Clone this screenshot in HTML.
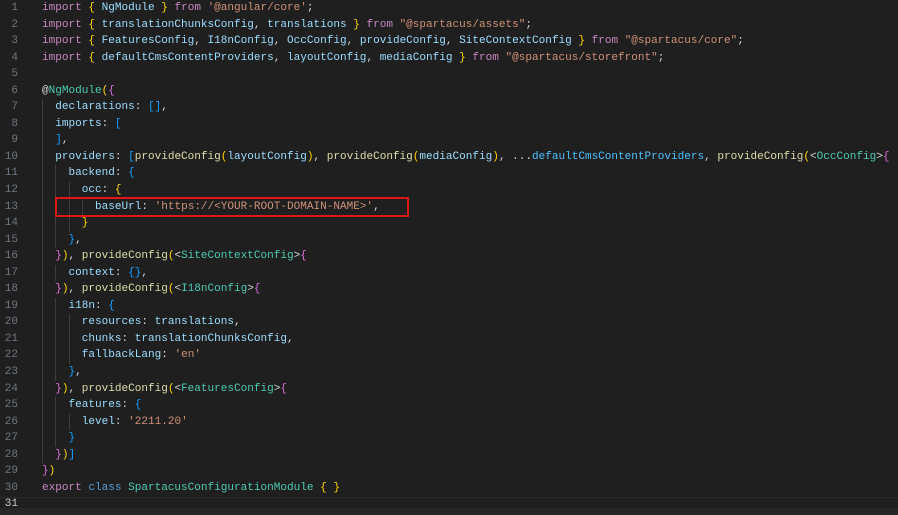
<!DOCTYPE html>
<html><head><meta charset="utf-8"><style>
html,body{margin:0;padding:0;background:#1f1f1f;width:898px;height:515px;overflow:hidden}
#ed{position:absolute;left:0;top:0;width:898px;font-family:"Liberation Mono",monospace;font-size:11.04px;line-height:16.55px;color:#d4d4d4}
.l{position:relative;height:16.55px;white-space:pre}
.n{position:absolute;left:0;width:18px;text-align:right;color:#6e7681}
.c{position:absolute;left:42px;white-space:pre}
.g{display:inline-block;font-style:normal;box-shadow:inset 1px 0 0 #3d3d3d}
.k{color:#c586c0}.y{color:#ffd700}.p{color:#da70d6}.b{color:#179fff}
.v{color:#9cdcfe}.s{color:#ce9178}.t{color:#4ec9b0}.f{color:#dcdcaa}.kw{color:#569cd6}.cn{color:#4fc1ff}
#cur{position:absolute;left:0;top:497px;width:898px;height:11px;border-top:1px solid #2a2a2a}
#bot{position:absolute;left:0;top:508px;width:898px;height:7px;background:#262626}
#box{position:absolute;left:55px;top:197px;width:350px;height:16px;border:2px solid #e0141b}
</style></head><body>
<div id="cur"></div><div id="bot"></div>
<div id="ed"><div class="l"><span class="n">1</span><span class="c"><span class="k">import</span> <span class="y">{</span> <span class="v">NgModule</span> <span class="y">}</span> <span class="k">from</span> <span class="s">'@angular/core'</span>;</span></div><div class="l"><span class="n">2</span><span class="c"><span class="k">import</span> <span class="y">{</span> <span class="v">translationChunksConfig</span>, <span class="v">translations</span> <span class="y">}</span> <span class="k">from</span> <span class="s">"@spartacus/assets"</span>;</span></div><div class="l"><span class="n">3</span><span class="c"><span class="k">import</span> <span class="y">{</span> <span class="v">FeaturesConfig</span>, <span class="v">I18nConfig</span>, <span class="v">OccConfig</span>, <span class="v">provideConfig</span>, <span class="v">SiteContextConfig</span> <span class="y">}</span> <span class="k">from</span> <span class="s">"@spartacus/core"</span>;</span></div><div class="l"><span class="n">4</span><span class="c"><span class="k">import</span> <span class="y">{</span> <span class="v">defaultCmsContentProviders</span>, <span class="v">layoutConfig</span>, <span class="v">mediaConfig</span> <span class="y">}</span> <span class="k">from</span> <span class="s">"@spartacus/storefront"</span>;</span></div><div class="l"><span class="n">5</span></div><div class="l"><span class="n">6</span><span class="c">@<span class="t">NgModule</span><span class="y">(</span><span class="p">{</span></span></div><div class="l"><span class="n">7</span><span class="c"><i class="g">  </i><span class="v">declarations</span>: <span class="b">[]</span>,</span></div><div class="l"><span class="n">8</span><span class="c"><i class="g">  </i><span class="v">imports</span>: <span class="b">[</span></span></div><div class="l"><span class="n">9</span><span class="c"><i class="g">  </i><span class="b">]</span>,</span></div><div class="l"><span class="n">10</span><span class="c"><i class="g">  </i><span class="v">providers</span>: <span class="b">[</span><span class="f">provideConfig</span><span class="y">(</span><span class="v">layoutConfig</span><span class="y">)</span>, <span class="f">provideConfig</span><span class="y">(</span><span class="v">mediaConfig</span><span class="y">)</span>, ...<span class="cn">defaultCmsContentProviders</span>, <span class="f">provideConfig</span><span class="y">(</span>&lt;<span class="t">OccConfig</span>&gt;<span class="p">{</span></span></div><div class="l"><span class="n">11</span><span class="c"><i class="g">  </i><i class="g">  </i><span class="v">backend</span>: <span class="b">{</span></span></div><div class="l"><span class="n">12</span><span class="c"><i class="g">  </i><i class="g">  </i><i class="g">  </i><span class="v">occ</span>: <span class="y">{</span></span></div><div class="l"><span class="n">13</span><span class="c"><i class="g">  </i><i class="g">  </i><i class="g">  </i><i class="g">  </i><span class="v">baseUrl</span>: <span class="s">'https://&lt;YOUR-ROOT-DOMAIN-NAME&gt;'</span>,</span></div><div class="l"><span class="n">14</span><span class="c"><i class="g">  </i><i class="g">  </i><i class="g">  </i><span class="y">}</span></span></div><div class="l"><span class="n">15</span><span class="c"><i class="g">  </i><i class="g">  </i><span class="b">}</span>,</span></div><div class="l"><span class="n">16</span><span class="c"><i class="g">  </i><span class="p">}</span><span class="y">)</span>, <span class="f">provideConfig</span><span class="y">(</span>&lt;<span class="t">SiteContextConfig</span>&gt;<span class="p">{</span></span></div><div class="l"><span class="n">17</span><span class="c"><i class="g">  </i><i class="g">  </i><span class="v">context</span>: <span class="b">{}</span>,</span></div><div class="l"><span class="n">18</span><span class="c"><i class="g">  </i><span class="p">}</span><span class="y">)</span>, <span class="f">provideConfig</span><span class="y">(</span>&lt;<span class="t">I18nConfig</span>&gt;<span class="p">{</span></span></div><div class="l"><span class="n">19</span><span class="c"><i class="g">  </i><i class="g">  </i><span class="v">i18n</span>: <span class="b">{</span></span></div><div class="l"><span class="n">20</span><span class="c"><i class="g">  </i><i class="g">  </i><i class="g">  </i><span class="v">resources</span>: <span class="v">translations</span>,</span></div><div class="l"><span class="n">21</span><span class="c"><i class="g">  </i><i class="g">  </i><i class="g">  </i><span class="v">chunks</span>: <span class="v">translationChunksConfig</span>,</span></div><div class="l"><span class="n">22</span><span class="c"><i class="g">  </i><i class="g">  </i><i class="g">  </i><span class="v">fallbackLang</span>: <span class="s">'en'</span></span></div><div class="l"><span class="n">23</span><span class="c"><i class="g">  </i><i class="g">  </i><span class="b">}</span>,</span></div><div class="l"><span class="n">24</span><span class="c"><i class="g">  </i><span class="p">}</span><span class="y">)</span>, <span class="f">provideConfig</span><span class="y">(</span>&lt;<span class="t">FeaturesConfig</span>&gt;<span class="p">{</span></span></div><div class="l"><span class="n">25</span><span class="c"><i class="g">  </i><i class="g">  </i><span class="v">features</span>: <span class="b">{</span></span></div><div class="l"><span class="n">26</span><span class="c"><i class="g">  </i><i class="g">  </i><i class="g">  </i><span class="v">level</span>: <span class="s">'2211.20'</span></span></div><div class="l"><span class="n">27</span><span class="c"><i class="g">  </i><i class="g">  </i><span class="b">}</span></span></div><div class="l"><span class="n">28</span><span class="c"><i class="g">  </i><span class="p">}</span><span class="y">)</span><span class="b">]</span></span></div><div class="l"><span class="n">29</span><span class="c"><span class="p">}</span><span class="y">)</span></span></div><div class="l"><span class="n">30</span><span class="c"><span class="k">export</span> <span class="kw">class</span> <span class="t">SpartacusConfigurationModule</span> <span class="y">{</span> <span class="y">}</span></span></div><div class="l"><span class="n" style="color:#c6c6c6">31</span></div></div>
<div id="box"></div>
</body></html>
